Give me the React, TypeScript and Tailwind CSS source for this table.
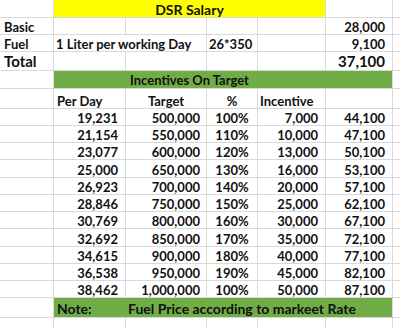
const rows: string[][] = [
  ['19,231', '500,000', '100%', '7,000', '44,100'],
  ['21,154', '550,000', '110%', '10,000', '47,100'],
  ['23,077', '600,000', '120%', '13,000', '50,100'],
  ['25,000', '650,000', '130%', '16,000', '53,100'],
  ['26,923', '700,000', '140%', '20,000', '57,100'],
  ['28,846', '750,000', '150%', '25,000', '62,100'],
  ['30,769', '800,000', '160%', '30,000', '67,100'],
  ['32,692', '850,000', '170%', '35,000', '72,100'],
  ['34,615', '900,000', '180%', '40,000', '77,100'],
  ['36,538', '950,000', '190%', '45,000', '82,100'],
  ['38,462', '1,000,000', '100%', '50,000', '87,100'],
];

// a plain spreadsheet cell, text sits at the bottom like Excel
function Cell({ children, className = '' }: { children?: React.ReactNode; className?: string }) {
  return <div className={`flex items-end bg-white leading-[14px] ${className}`}>{children}</div>;
}

export default function App() {
  return (
    <div className="w-[400px] h-[328px] overflow-hidden bg-white font-['Lato',sans-serif] font-bold text-[13px] text-[#111]">
      <div className="grid grid-cols-[53px_71px_80px_50px_67px_66px_1fr] grid-rows-[17px_16px_16px_18px_17px_19px_16px_16px_16px_17px_16px_16px_16px_17px_16px_16px_16px_19px_20px] gap-px bg-[#d9d9d9]">
        {/* title */}
        <Cell />
        <div className="col-span-4 flex items-end justify-center bg-[#ffff00] leading-[15px] text-[14px]">DSR Salary</div>
        <Cell />
        <Cell />

        {/* basic */}
        <Cell className="pl-[4px]">Basic</Cell>
        <Cell />
        <Cell />
        <Cell />
        <Cell />
        <Cell className="justify-end pr-[7px]">28,000</Cell>
        <Cell />

        {/* fuel */}
        <Cell className="pl-[4px]">Fuel</Cell>
        <Cell className="col-span-2 pl-[2px]">1 Liter per working Day</Cell>
        <Cell className="pl-[2px]">26*350</Cell>
        <Cell />
        <Cell className="justify-end pr-[7px]">9,100</Cell>
        <Cell />

        {/* total */}
        <Cell className="pl-[4px] text-[15px] leading-[17px]">Total</Cell>
        <Cell />
        <Cell />
        <Cell />
        <Cell />
        <Cell className="justify-end pr-[7px] text-[15px] leading-[17px]">37,100</Cell>
        <Cell />

        {/* incentives band */}
        <Cell />
        <div className="col-span-5 flex items-end bg-[#70ad47] leading-[15px]">
          <div className="w-[271px] text-center">Incentives On Target</div>
        </div>
        <Cell />

        {/* header */}
        <Cell />
        <Cell className="pl-[3px]">Per Day</Cell>
        <Cell className="justify-center">Target</Cell>
        <Cell className="justify-center">%</Cell>
        <Cell className="pl-[2px]">Incentive</Cell>
        <Cell />
        <Cell />

        {rows.map((r, i) => (
          <div key={i} className="contents">
            <Cell />
            <Cell className="justify-end pr-[7px]">{r[0]}</Cell>
            <Cell className="justify-end pr-[6px]">{r[1]}</Cell>
            <Cell className="justify-center">{r[2]}</Cell>
            <Cell className="justify-end pr-[7px]">{r[3]}</Cell>
            <Cell className="justify-end pr-[7px]">{r[4]}</Cell>
            <Cell />
          </div>
        ))}

        {/* note */}
        <Cell />
        <div className="col-span-5 flex items-end bg-[#70ad47] leading-[16px] text-[14px]">
          <div className="w-[72px] pl-[3px]">Note:</div>
          <div className="pl-[2px]">Fuel Price according to markeet Rate</div>
        </div>
        <Cell />

        {/* trailing empty row */}
        <Cell />
        <Cell />
        <Cell />
        <Cell />
        <Cell />
        <Cell />
        <Cell />
      </div>
    </div>
  );
}
